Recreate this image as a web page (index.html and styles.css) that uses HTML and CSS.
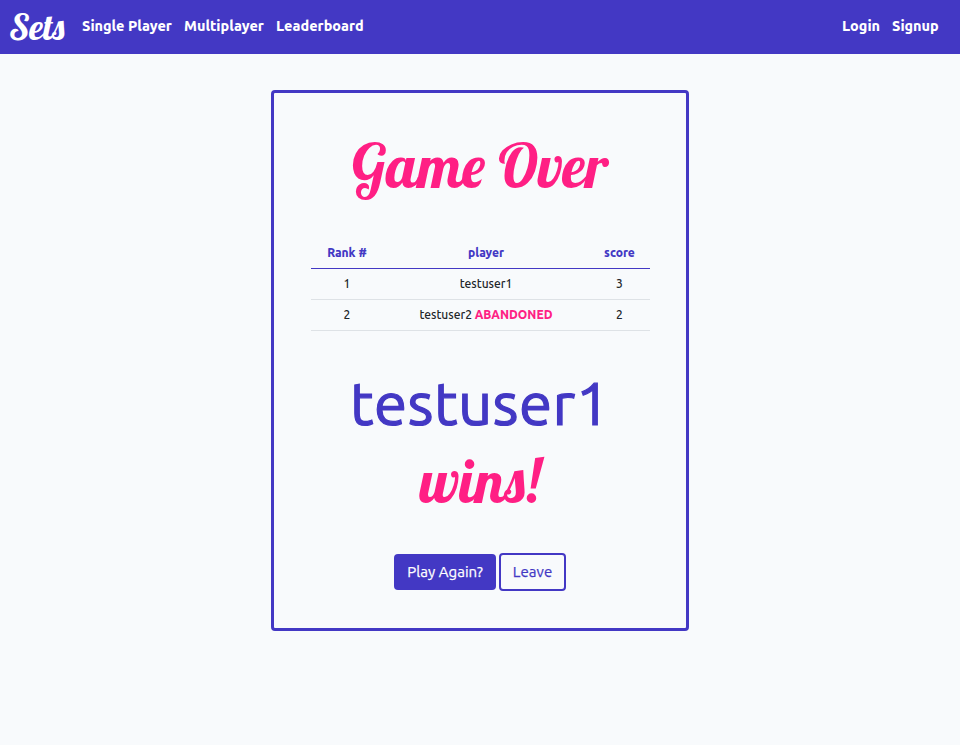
FILE: index.html
```html
<!DOCTYPE html>
<html lang="en">
<head>
<meta charset="utf-8">
<title>Sets</title>
<link rel="stylesheet" href="styles.css">
</head>
<body>
<nav class="navbar">
  <a class="brand">Sets</a>
  <div class="links">
    <a class="single">Single Player</a>
    <a class="multi">Multiplayer</a>
    <a class="leader">Leaderboard</a>
  </div>
  <div class="links account">
    <a class="login">Login</a>
    <a class="signup">Signup</a>
  </div>
</nav>
<main class="card">
  <h1 class="title">Game Over</h1>
  <table class="scores">
    <thead><tr><th class="rank">Rank #</th><th>player</th><th class="score">score</th></tr></thead>
    <tbody>
      <tr><td>1</td><td>testuser1</td><td>3</td></tr>
      <tr><td>2</td><td>testuser2 <strong>ABANDONED</strong></td><td>2</td></tr>
    </tbody>
  </table>
  <div class="winner">testuser1</div>
  <div class="wins">wins!</div>
  <div class="actions">
    <button class="btn primary">Play Again?</button>
    <button class="btn outline">Leave</button>
  </div>
</main>
</body>
</html>
```
FILE: styles.css
```css
* { box-sizing: border-box; }

body {
  margin: 0;
  background: #f8fafc;
  color: #212529;
  font-family: Ubuntu, "Noto Sans", sans-serif;
}

.navbar {
  display: flex;
  align-items: center;
  height: 54px;
  padding: 0 21px 2px 9px;
  background: #4338c4;
  color: #fff;
}

.brand {
  width: 73px;
  font-family: Lobster, "Liberation Serif", serif;
  font-size: 36px;
  font-weight: 400;
  line-height: 52px;
  padding-top: 1px;
}

.links {
  display: flex;
  gap: 12px;
  font-size: 14.4px;
  font-weight: 800;
  line-height: 20px;
  white-space: nowrap;
}

.single { width: 90px; }
.multi { width: 80px; }
.leader { width: 88px; }
.login { width: 38px; }
.signup { width: 47px; }
.account { margin-left: auto; }

.card {
  width: 418px;
  height: 541px;
  margin: 36px auto 0;
  padding: 34px 36px 0 37px;
  border: 3px solid #4338c4;
  border-radius: 4px;
  text-align: center;
}

.title, .wins {
  margin: 0 1px 0 0;
  color: #ff1f84;
  font-family: Lobster, "Liberation Serif", serif;
  font-size: 60px;
  font-weight: 400;
  line-height: 78px;
}

.title { height: 110px; }

.scores {
  width: 339px;
  table-layout: fixed;
  border-collapse: collapse;
  font-size: 12px;
  font-weight: 500;
  line-height: 18px;
}

.scores th, .scores td {
  height: 31px;
  padding: 0;
  border-bottom: 1px solid #dee2e6;
}

.scores th {
  padding-top: 1px;
  border-color: #4338c4;
  color: #4338c4;
  font-weight: 800;
}

.rank { width: 72px; }
.score { width: 61px; }
.scores strong { color: #ff1f84; font-weight: 800; }

.winner {
  margin: 33px 1px 0 0;
  color: #4338c4;
  font-size: 60px;
  letter-spacing: 0.4px;
  line-height: 78px;
  -webkit-text-stroke: 1.2px #4338c4;
}

.actions {
  display: flex;
  justify-content: center;
  align-items: center;
  gap: 3px;
  margin: 33px 1px 0 0;
}

.btn {
  height: 36px;
  padding: 0;
  border: 0;
  border-radius: 4px;
  font: 400 15px/20px Ubuntu, "Noto Sans", sans-serif;
  letter-spacing: 0.05px;
  white-space: nowrap;
  -webkit-text-stroke: 0.25px currentColor;
}

.primary {
  width: 102px;
  background: #4338c4;
  color: #fff;
}

.outline {
  width: 67px;
  height: 38px;
  border: 2px solid #4338c4;
  background: transparent;
  color: #4338c4;
}
```
